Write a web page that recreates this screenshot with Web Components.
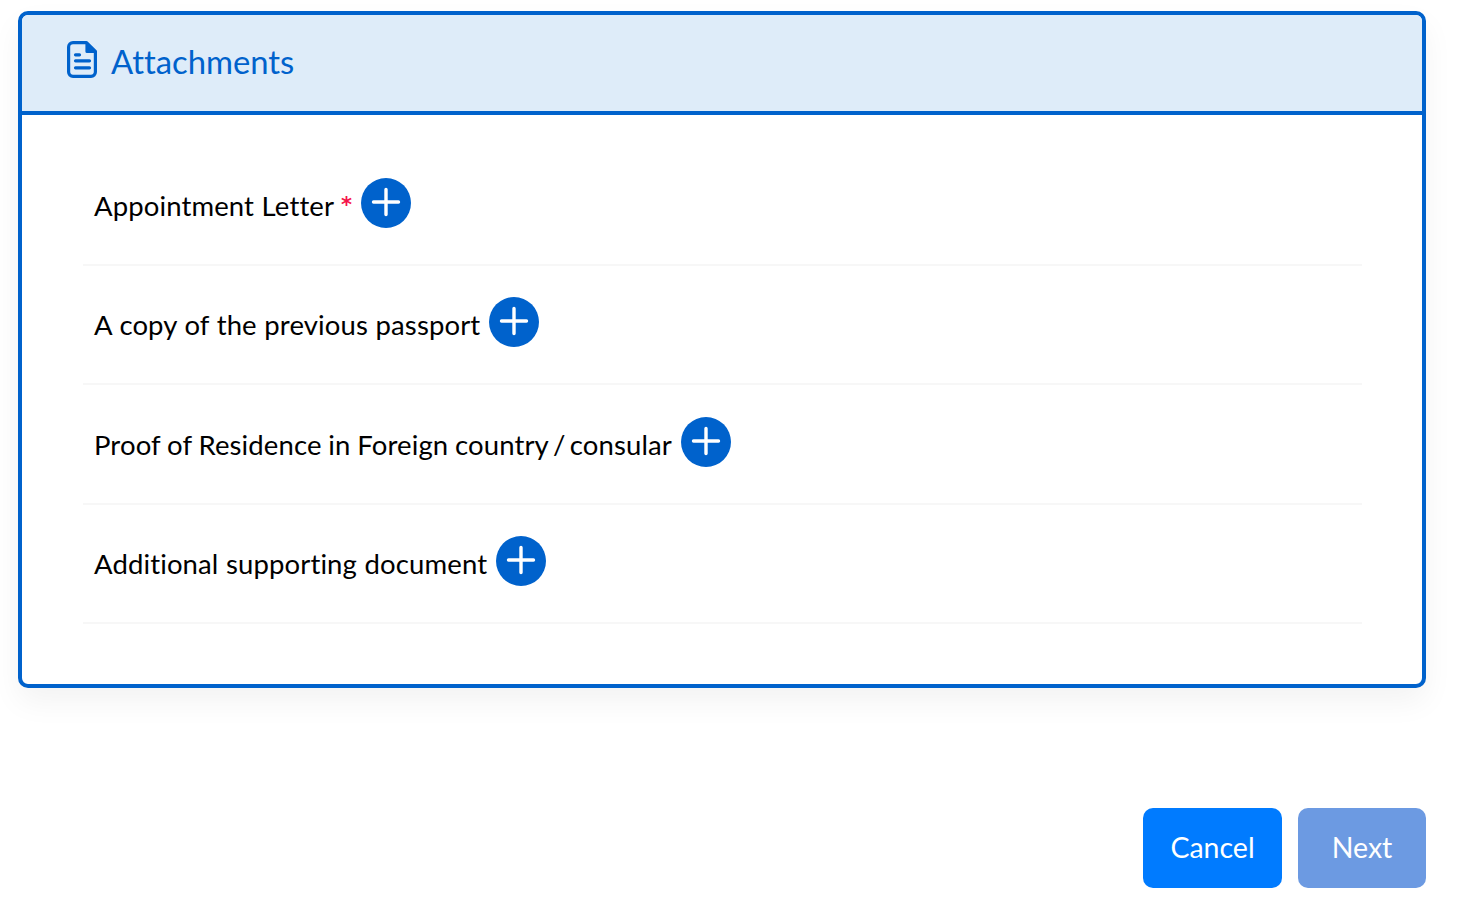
<!DOCTYPE html>
<html>
<head>
<meta charset="utf-8">
<title>Attachments</title>
<style>
  body{
    margin:0;
    background:#fff;
    font-family:Lato,"Open Sans",sans-serif;
    font-variant-ligatures:none;
  }
</style>
</head>
<body>
<attachments-page>
  <attachments-card title-text="Attachments">
    <attachment-row>Appointment Letter <span slot="mark">*</span></attachment-row>
    <attachment-row>A copy of the previous passport</attachment-row>
    <attachment-row><span style="word-spacing:-.4px">Proof of Residence in Foreign country</span><span style="word-spacing:-3px"> / </span>consular</attachment-row>
    <attachment-row>Additional supporting document</attachment-row>
  </attachments-card>
  <form-actions>
    <action-button kind="cancel">Cancel</action-button>
    <action-button kind="next">Next</action-button>
  </form-actions>
</attachments-page>

<script>
class AttachmentsPage extends HTMLElement {
  constructor() {
    super();
    this.attachShadow({ mode: "open" });
    this.shadowRoot.innerHTML = `
      <style>
        :host{
          display:flex;
          flex-direction:column;
          width:1408px;
          padding:11px 0 0 18px;
        }
      </style>
      <slot></slot>
    `;
  }
}

class AttachmentsCard extends HTMLElement {
  constructor() {
    super();
    this.attachShadow({ mode: "open" });
    this.shadowRoot.innerHTML = `
      <style>
        :host{
          display:block;
          height:677px;
          box-sizing:border-box;
          border:4px solid #0062cc;
          border-radius:10px;
          box-shadow:0 14px 30px rgba(0,0,0,.05);
          background:#fff;
        }
        #head{
          background:#deecf9;
          border-bottom:4px solid #0062cc;
          border-top-left-radius:6px;
          border-top-right-radius:6px;
          display:flex;
          align-items:center;
          padding:0 0 4px 45px;
          height:92px;
          gap:13px;
          color:#0062cc;
          font-size:32.800px;
        }
        svg{ width:31px; height:37px; flex:none; margin-top:-4px; }
        #rows{
          display:flex;
          flex-direction:column;
          padding:31px 60px 0 61px;
        }
      </style>
      <div id="head">
        <svg viewBox="0 0 31 37" fill="none" stroke="#0062cc" stroke-width="3.200" stroke-linejoin="round" stroke-linecap="round">
          <path d="M6 1.600H19.500L28.400 10.500V31A4.400 4.400 0 0 1 24 35.400H6A4.400 4.400 0 0 1 1.600 31V6A4.400 4.400 0 0 1 6 1.600Z"/>
          <path d="M20 3V10.500H27Z" fill="#0062cc" />
          <path d="M8.500 13.800H12.500M8.500 19.800H22.500M8.500 26.800H22.500"/>
        </svg>
        <span id="title"></span>
      </div>
      <div id="rows"><slot></slot></div>
    `;
  }

  connectedCallback() {
    this.shadowRoot.getElementById("title").textContent = this.getAttribute("title-text");
  }
}

class AttachmentRow extends HTMLElement {
  constructor() {
    super();
    this.attachShadow({ mode: "open" });
    this.shadowRoot.innerHTML = `
      <style>
        :host{
          display:flex;
          align-items:center;
          height:119.500px;
          box-sizing:border-box;
          padding:0 0 6px 11px;
          border-bottom:2px solid #f7f7f7;
          font-size:27.500px;
          letter-spacing:.12px;
          word-spacing:.4px;
          color:#000;
        }
        #text{ margin-top:6.600px; white-space:pre; }
        ::slotted([slot="mark"]){
          color:#f5134b;
          font-family:"DejaVu Sans",sans-serif;
          font-weight:bold;
          font-size:21px;
          vertical-align:4px;
        }
        #add{
          margin-left:9px;
          margin-top:2px;
          width:50px;
          height:50px;
          border-radius:50%;
          background:#0062cc;
          flex:none;
        }
        #add svg{ display:block; }
      </style>
      <span id="text"><slot></slot><slot name="mark"></slot></span>
      <div id="add">
        <svg width="50" height="50" viewBox="0 0 50 50" fill="none" stroke="#fff" stroke-width="3.400" stroke-linecap="round">
          <path d="M25 11.500V36.500M12.500 24H37.500"/>
        </svg>
      </div>
    `;
  }
}

class FormActions extends HTMLElement {
  constructor() {
    super();
    this.attachShadow({ mode: "open" });
    this.shadowRoot.innerHTML = `
      <style>
        :host{
          display:flex;
          justify-content:flex-end;
          gap:16px;
          margin-top:120px;
        }
      </style>
      <slot></slot>
    `;
  }
}

class ActionButton extends HTMLElement {
  constructor() {
    super();
    this.attachShadow({ mode: "open" });
    this.shadowRoot.innerHTML = `
      <style>
        :host{
          display:flex;
          align-items:center;
          justify-content:center;
          box-sizing:border-box;
          height:80px;
          padding-bottom:3px;
          border-radius:10px;
          color:#fff;
          font-size:28.500px;
        }
        :host([kind="cancel"]){ width:139px; background:#007bff; }
        :host([kind="next"]){ width:128px; background:#6c9ae2; }
      </style>
      <slot></slot>
    `;
  }
}

customElements.define("attachments-page", AttachmentsPage);
customElements.define("attachments-card", AttachmentsCard);
customElements.define("attachment-row", AttachmentRow);
customElements.define("form-actions", FormActions);
customElements.define("action-button", ActionButton);
</script>
</body>
</html>
